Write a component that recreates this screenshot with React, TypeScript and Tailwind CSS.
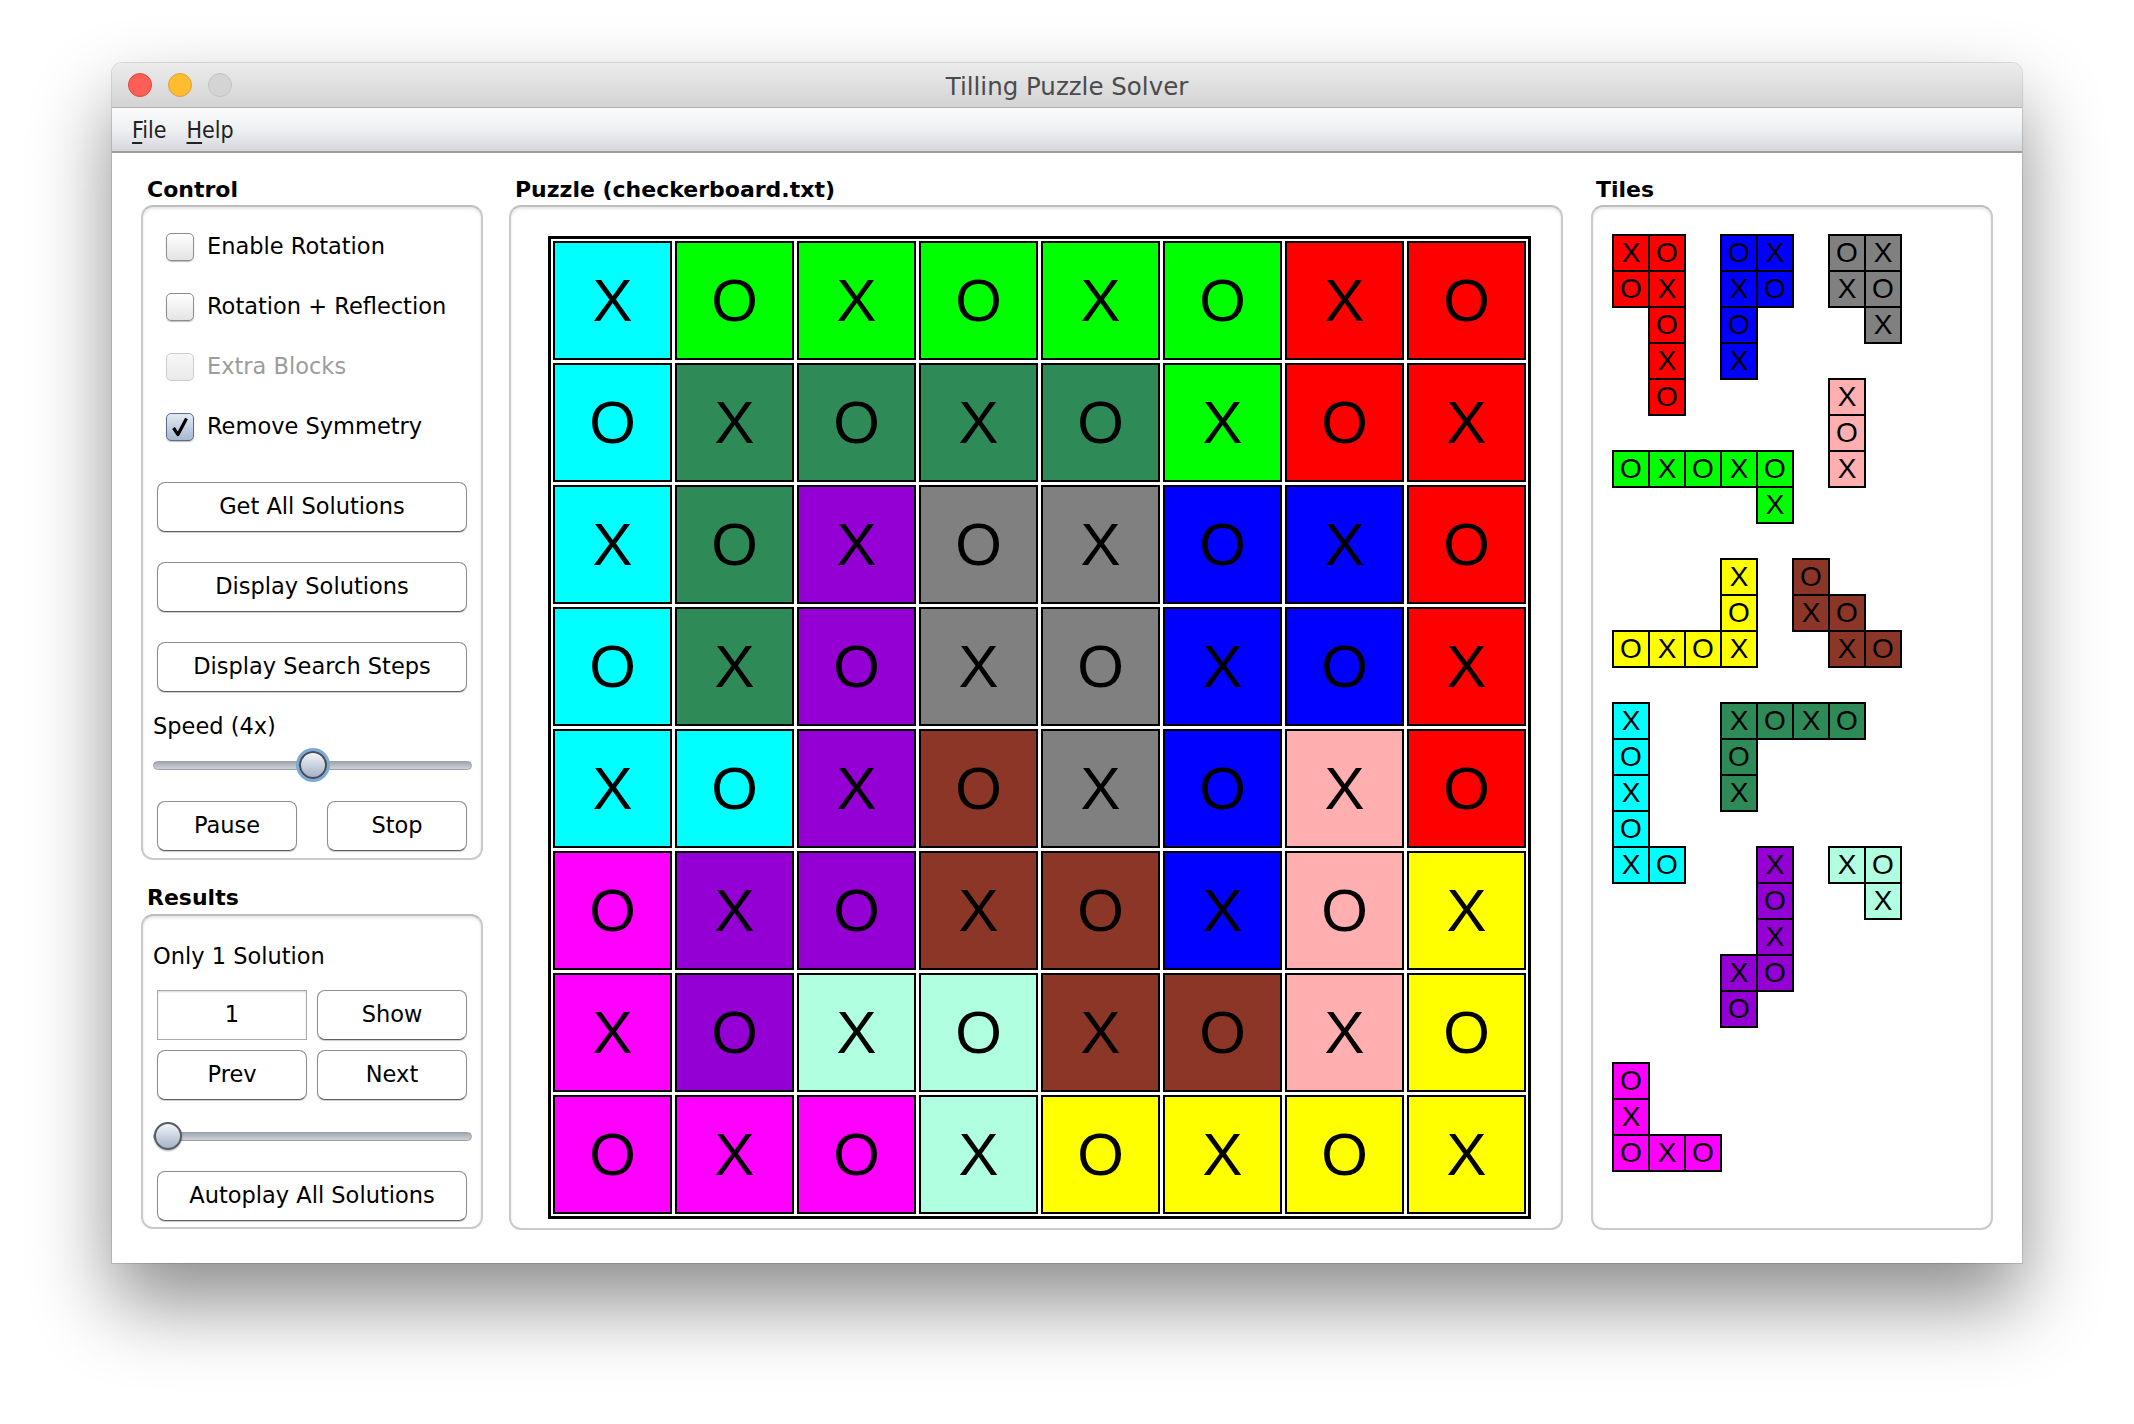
import React from 'react';

const UI = "font-['DejaVu_Sans',sans-serif]";

const CELL_BG: Record<string, string> = {
  cyan: 'bg-[#00ffff]',
  green: 'bg-[#00ff00]',
  red: 'bg-[#ff0000]',
  sea: 'bg-[#2e8b57]',
  purple: 'bg-[#9400d3]',
  gray: 'bg-[#808080]',
  blue: 'bg-[#0000ff]',
  brown: 'bg-[#8b3626]',
  pink: 'bg-[#ffafaf]',
  magenta: 'bg-[#ff00ff]',
  mint: 'bg-[#b0ffe0]',
  yellow: 'bg-[#ffff00]',
};

const BOARD: string[][] = [
  ['cyan', 'green', 'green', 'green', 'green', 'green', 'red', 'red'],
  ['cyan', 'sea', 'sea', 'sea', 'sea', 'green', 'red', 'red'],
  ['cyan', 'sea', 'purple', 'gray', 'gray', 'blue', 'blue', 'red'],
  ['cyan', 'sea', 'purple', 'gray', 'gray', 'blue', 'blue', 'red'],
  ['cyan', 'cyan', 'purple', 'brown', 'gray', 'blue', 'pink', 'red'],
  ['magenta', 'purple', 'purple', 'brown', 'brown', 'blue', 'pink', 'yellow'],
  ['magenta', 'purple', 'mint', 'mint', 'brown', 'brown', 'pink', 'yellow'],
  ['magenta', 'magenta', 'magenta', 'mint', 'yellow', 'yellow', 'yellow', 'yellow'],
];

type Tile = { color: string; cells: [number, number, string][] };

const TILES: Tile[] = [
  { color: 'red', cells: [[0, 0, 'X'], [0, 1, 'O'], [1, 0, 'O'], [1, 1, 'X'], [2, 1, 'O'], [3, 1, 'X'], [4, 1, 'O']] },
  { color: 'blue', cells: [[0, 3, 'O'], [0, 4, 'X'], [1, 3, 'X'], [1, 4, 'O'], [2, 3, 'O'], [3, 3, 'X']] },
  { color: 'gray', cells: [[0, 6, 'O'], [0, 7, 'X'], [1, 6, 'X'], [1, 7, 'O'], [2, 7, 'X']] },
  { color: 'pink', cells: [[4, 6, 'X'], [5, 6, 'O'], [6, 6, 'X']] },
  { color: 'green', cells: [[6, 0, 'O'], [6, 1, 'X'], [6, 2, 'O'], [6, 3, 'X'], [6, 4, 'O'], [7, 4, 'X']] },
  { color: 'yellow', cells: [[9, 3, 'X'], [10, 3, 'O'], [11, 0, 'O'], [11, 1, 'X'], [11, 2, 'O'], [11, 3, 'X']] },
  { color: 'brown', cells: [[9, 5, 'O'], [10, 5, 'X'], [10, 6, 'O'], [11, 6, 'X'], [11, 7, 'O']] },
  { color: 'cyan', cells: [[13, 0, 'X'], [14, 0, 'O'], [15, 0, 'X'], [16, 0, 'O'], [17, 0, 'X'], [17, 1, 'O']] },
  { color: 'sea', cells: [[13, 3, 'X'], [13, 4, 'O'], [13, 5, 'X'], [13, 6, 'O'], [14, 3, 'O'], [15, 3, 'X']] },
  { color: 'purple', cells: [[17, 4, 'X'], [18, 4, 'O'], [19, 4, 'X'], [20, 3, 'X'], [20, 4, 'O'], [21, 3, 'O']] },
  { color: 'mint', cells: [[17, 6, 'X'], [17, 7, 'O'], [18, 7, 'X']] },
  { color: 'magenta', cells: [[23, 0, 'O'], [24, 0, 'X'], [25, 0, 'O'], [25, 1, 'X'], [25, 2, 'O']] },
];

function Checkbox({ label, checked = false, disabled = false }: { label: string; checked?: boolean; disabled?: boolean }) {
  return (
    <div className="flex h-[28px] items-center gap-[13px] pl-[23px]">
      <div
        className={
          checked
            ? 'flex h-[28px] w-[28px] items-center justify-center rounded-[5px] border border-[#5d6c82] bg-gradient-to-b from-[#e3eaf3] to-[#a6b9d1] shadow-[0_1px_1px_rgba(0,0,0,0.25)]'
            : disabled
              ? 'h-[28px] w-[28px] rounded-[5px] border border-[#cdcdcd] bg-gradient-to-b from-[#f7f7f7] to-[#e9e9e9]'
              : 'h-[28px] w-[28px] rounded-[5px] border border-[#8c8c8c] bg-gradient-to-b from-white to-[#e4e4e4] shadow-[0_1px_1px_rgba(0,0,0,0.25)]'
        }
      >
        {checked && (
          <svg width="22" height="22" viewBox="0 0 22 22">
            <path d="M4.5 12 L9 18.5 L17.5 2.5" fill="none" stroke="#000" strokeWidth="3.2" strokeLinejoin="round" />
          </svg>
        )}
      </div>
      <span className={disabled ? 'text-[22.5px] text-[#9c9c9c]' : 'text-[22.5px] text-black'}>{label}</span>
    </div>
  );
}

function Button({ children, className = '' }: { children: React.ReactNode; className?: string }) {
  return (
    <div
      className={
        'flex h-[50px] items-center justify-center rounded-[8px] border border-[#8d8d8d] border-b-[#5f5f5f] bg-white text-[22.5px] text-black shadow-[0_1px_1px_rgba(0,0,0,0.2)] ' +
        className
      }
    >
      {children}
    </div>
  );
}

function Slider({ pos, focused = false }: { pos: number; focused?: boolean }) {
  return (
    <div className="relative mx-[10px] mr-[9px] flex h-[30px] items-center">
      <div className="h-[9px] w-full rounded-full border border-[#9aa0a8] bg-gradient-to-b from-[#a2a8b1] to-[#cfd3d8]" />
      <div
        className={
          focused
            ? 'absolute top-[1px] h-[28px] w-[28px] rounded-full border-2 border-[#464c55] bg-gradient-to-b from-[#f3f5f8] to-[#a3b3c7] ring-[3px] ring-[#7aa9da]'
            : 'absolute top-[1px] h-[28px] w-[28px] rounded-full border-2 border-[#555b63] bg-gradient-to-b from-[#f3f5f8] to-[#a3b3c7] shadow-[0_1px_2px_rgba(0,0,0,0.3)]'
        }
        style={{ left: pos }}
      />
    </div>
  );
}

function Panel({ className = '', children }: { className?: string; children: React.ReactNode }) {
  return (
    <div
      className={
        'rounded-[12px] border-2 border-[#cacaca] border-t-[#bdbdbd] bg-white shadow-[inset_0_2px_3px_rgba(0,0,0,0.10)] ' + className
      }
    >
      {children}
    </div>
  );
}

function Heading({ children, className = '' }: { children: React.ReactNode; className?: string }) {
  return <div className={'h-[26px] text-[22px] font-bold leading-[26px] text-black ' + className}>{children}</div>;
}

export default function App() {
  return (
    <div className={'min-h-screen bg-white pl-[112px] pt-[63px] ' + UI}>
      <div className="flex h-[1200px] w-[1910px] flex-col rounded-t-[10px] bg-white shadow-[0_40px_80px_rgba(0,0,0,0.45),0_0_0_1px_rgba(0,0,0,0.12)]">
        {/* Title bar */}
        <div className="relative flex h-[45px] items-center justify-center rounded-t-[10px] border-b border-[#b2b2b2] bg-gradient-to-b from-[#ececec] to-[#d3d3d3] pt-[4px]">
          <div className="absolute left-[16px] top-[10px] flex gap-[16px]">
            <div className="h-[24px] w-[24px] rounded-full border border-[#e0443e] bg-[#fd5f57]" />
            <div className="h-[24px] w-[24px] rounded-full border border-[#dea236] bg-[#febc2e]" />
            <div className="h-[24px] w-[24px] rounded-full border border-[#c2c2c2] bg-[#d4d4d4]" />
          </div>
          <span className="text-[24.5px] text-[#4b4b4b]">Tilling Puzzle Solver</span>
        </div>

        {/* Menu bar */}
        <div className="flex h-[45px] items-center gap-[20px] border-b-2 border-[#9c9c9c] bg-gradient-to-b from-[#fbfbfb] via-[#eef0f2] to-[#d4d8de] pl-[20px] pt-[1px] font-['Liberation_Sans_Narrow','DejaVu_Sans_Condensed',sans-serif] text-[23px] text-[#222]">
          <span>
            <span className="underline underline-offset-[4px]">F</span>ile
          </span>
          <span>
            <span className="underline underline-offset-[4px]">H</span>elp
          </span>
        </div>

        {/* Content */}
        <div className="flex flex-1 items-start px-[29px] pt-[24px]">
          {/* Left column */}
          <div className="flex w-[342px] flex-col">
            <Heading className="mb-[2px] pl-[6px]">Control</Heading>
            <Panel className="pb-[7px] pt-[26px]">
              <div className="flex flex-col gap-[32px]">
                <Checkbox label="Enable Rotation" />
                <Checkbox label="Rotation + Reflection" />
                <Checkbox label="Extra Blocks" disabled />
                <Checkbox label="Remove Symmetry" checked />
              </div>
              <div className="mt-[41px] flex flex-col gap-[30px] px-[14px]">
                <Button>Get All Solutions</Button>
                <Button>Display Solutions</Button>
                <Button>Display Search Steps</Button>
              </div>
              <div className="mt-[20px] h-[28px] pl-[10px] text-[22.5px] leading-[28px]">Speed (4x)</div>
              <div className="mt-[10px]">
                <Slider pos={146} focused />
              </div>
              <div className="mt-[21px] flex gap-[30px] px-[14px]">
                <Button className="flex-1">Pause</Button>
                <Button className="flex-1">Stop</Button>
              </div>
            </Panel>

            <Heading className="mb-[3px] mt-[25px] pl-[6px]">Results</Heading>
            <Panel className="pb-[6px] pt-[26px]">
              <div className="h-[28px] pl-[10px] text-[22.5px] leading-[28px]">Only 1 Solution</div>
              <div className="mt-[20px] grid grid-cols-2 gap-x-[10px] gap-y-[10px] px-[14px]">
                <div className="flex h-[50px] items-center justify-center border border-[#a9a9a9] bg-white text-[22.5px] shadow-[inset_0_1px_2px_rgba(0,0,0,0.15)]">
                  1
                </div>
                <Button>Show</Button>
                <Button>Prev</Button>
                <Button>Next</Button>
              </div>
              <div className="mt-[21px]">
                <Slider pos={1} />
              </div>
              <div className="mt-[20px] px-[14px]">
                <Button>Autoplay All Solutions</Button>
              </div>
            </Panel>
          </div>

          {/* Puzzle */}
          <div className="ml-[26px] flex w-[1054px] flex-col self-stretch pb-[33px]">
            <Heading className="mb-[2px] pl-[6px]">Puzzle (checkerboard.txt)</Heading>
            <Panel className="flex-1 pl-[37px] pt-[29px]">
              <div className="inline-grid grid-cols-[repeat(8,119px)] gap-[3px] border-[3px] border-black bg-white p-[2px] font-['Liberation_Sans',Arial,sans-serif]">
                {BOARD.map((row, r) =>
                  row.map((color, c) => (
                    <div
                      key={r + '-' + c}
                      className={'flex h-[119px] w-[119px] items-center justify-center border-2 border-black text-[60px] leading-none text-black ' + CELL_BG[color]}
                    >
                      {(r + c) % 2 === 0 ? 'X' : 'O'}
                    </div>
                  ))
                )}
              </div>
            </Panel>
          </div>

          {/* Tiles */}
          <div className="ml-[28px] flex w-[402px] flex-col self-stretch pb-[33px]">
            <Heading className="mb-[2px] pl-[5px]">Tiles</Heading>
            <Panel className="flex-1 pl-[19px] pt-[27px]">
              <div className="grid grid-cols-[repeat(8,36px)] grid-rows-[repeat(26,36px)] font-['Liberation_Sans',Arial,sans-serif]">
                {TILES.map((t, i) =>
                  t.cells.map(([r, c, l]) => (
                    <div
                      key={i + '-' + r + '-' + c}
                      className={'flex h-[38px] w-[38px] items-center justify-center border-2 border-black text-[28px] leading-none text-black ' + CELL_BG[t.color]}
                      style={{ gridRow: r + 1, gridColumn: c + 1 }}
                    >
                      {l}
                    </div>
                  ))
                )}
              </div>
            </Panel>
          </div>
        </div>
      </div>
    </div>
  );
}
